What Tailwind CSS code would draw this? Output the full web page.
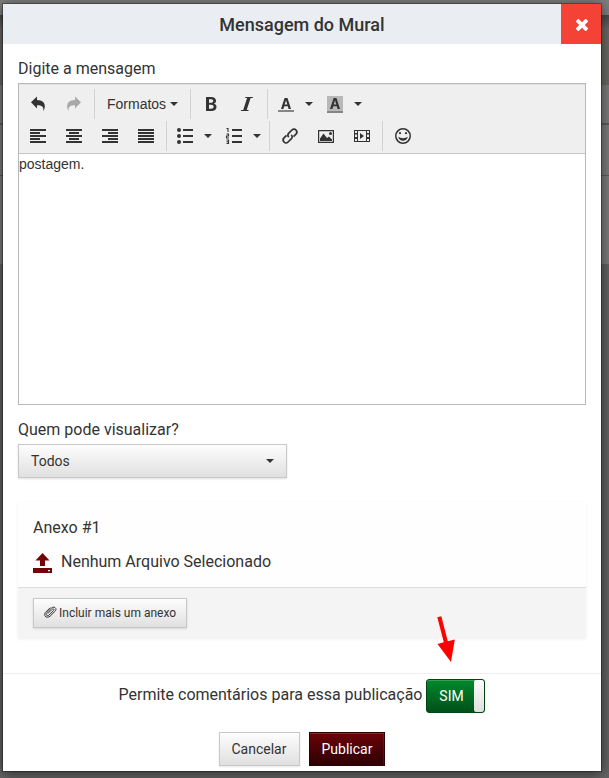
<!DOCTYPE html>
<html lang="pt-BR">
<head>
<meta charset="utf-8">
<title>Mensagem do Mural</title>
<script src="https://cdn.jsdelivr.net/npm/@tailwindcss/browser@4"></script>
</head>
<body class="relative h-[778px] w-[609px] overflow-hidden bg-[#555] font-['Roboto',sans-serif] text-base text-[#333]">
<!-- dimmed page behind the dialog -->
<div class="absolute inset-0 flex flex-col">
  <div class="h-[15px] bg-[#7d7d7d]"></div>
  <div class="h-[70px] bg-gradient-to-b from-[#484848] to-[#686764] to-20%"></div>
  <div class="h-[38px] bg-[#7b7b7b]"></div>
  <div class="h-[2px] bg-[#5c5c5e]"></div>
  <div class="h-[50px] bg-[#7b7b7b]"></div>
  <div class="h-px bg-[#5c5c5e]"></div>
  <div class="h-[88px] bg-[#7b7b7b]"></div>
  <div class="grow bg-[#636363]"></div>
</div>
<main class="relative mt-1 ml-[3px] h-[767px] w-[598px] bg-white shadow-[0_0_0_1px_rgba(0,0,0,0.3),0_2px_12px_rgba(0,0,0,0.6)]">
  <header class="flex h-10 bg-[#eaeef2]">
    <h1 class="grow pl-[40px] text-center text-[18px] leading-[41px] font-medium">Mensagem do Mural</h1>
    <button class="flex h-10 w-10 items-center justify-center bg-[#f44336]" aria-label="Fechar">
      <svg class="mt-px ml-px" width="12" height="12" viewBox="0 0 12 12"><path d="M2.300 2.300 9.700 9.700M9.700 2.300 2.300 9.700" stroke="#fff" stroke-width="3.800" stroke-linecap="square" /></svg>
    </button>
  </header>
  <div class="px-[15px] pt-[15px]">
    <label class="block h-6 text-base leading-[19px]">Digite a mensagem</label>
    <section class="h-[322px] w-[568px] border border-[#b8b8b8]">
      <div class="h-[70px] border-b border-[#c4c4c4] bg-[#efefef] pt-[5px] pl-px shadow-[inset_0_1px_0_#e2e2e2]">
        <div class="flex h-8 [&>svg]:shrink-0">
          <svg class="h-[30px] w-9" viewBox="-10 -7 36 30"><path d="M1 6.300 7 .5V4c6.500 0 10 4.500 6.500 11.200C13.700 10.800 12 9.300 7 9.300v3.200Z" fill="#333"/></svg>
          <svg class="h-[30px] w-9" viewBox="-10 -7 36 30"><path d="M15 6.300 9 .5V4C2.500 4-1 8.500 2.500 15.200 2.300 10.800 4 9.300 9 9.300v3.200Z" fill="#a8a8a8"/></svg>
          <span class="ml-0.5 h-[30px] w-px bg-[#d2d2d2]"></span>
          <span class="flex h-[30px] w-[95px] items-center pl-3 font-['Liberation_Sans',Arial,sans-serif] text-[14px] leading-5">Formatos<svg class="ml-[4px]" width="8" height="4" viewBox="0 0 8 4"><path d="M0 0h8L4 4Z" fill="#333"/></svg></span>
          <span class="h-[30px] w-px bg-[#d2d2d2]"></span>
          <svg class="ml-px h-[30px] w-9" viewBox="-11 -7 36 30"><path fill-rule="evenodd" d="M3 1h5c3.300 0 5 1.300 5 3.800 0 1.500-.8 2.500-2.100 3 1.700.4 2.600 1.500 2.600 3.200 0 2.600-1.900 4-5.300 4H3ZM6 3.200v3.500h2c1.400 0 2.200-.6 2.200-1.800S9.400 3.200 8 3.200Zm0 5.500v4.100h2.200c1.600 0 2.400-.7 2.400-2s-.8-2.100-2.500-2.100Z" fill="#333"/></svg>
          <svg class="h-[30px] w-9" viewBox="-11 -7 36 30"><path d="M6.500 1H14l-.4 1h-2L7.700 14h2l-.4 1H1.800l.4-1h2L8.100 2h-2Z" fill="#333"/></svg>
          <span class="ml-[3px] h-[30px] w-px bg-[#d2d2d2]"></span>
          <svg class="h-[30px] w-9" viewBox="-10 -7 36 30"><path fill-rule="evenodd" d="M6.600 2h2.900L13 13h-2.400l-.8-2.700H6.200L5.400 13H3ZM8 4.200 6.700 8.600h2.600Z" fill="#333"/><path d="M0 14h16v2H0Z" fill="#858585"/></svg>
          <svg class="h-[30px] w-[10px]" viewBox="-1 -13 10 30"><path d="M0 0h8L4 4Z" fill="#333"/></svg>
          <svg class="ml-[3px] h-[30px] w-9" viewBox="-10 -7 36 30"><path d="M0 0h16v16H0Z" fill="#b8b8b8"/><path fill-rule="evenodd" d="M6.600 2h2.900L13 13h-2.400l-.8-2.700H6.200L5.400 13H3ZM8 4.200 6.700 8.600h2.600Z" fill="#333"/><path d="M0 15h16v2H0Z" fill="#858585"/></svg>
          <svg class="h-[30px] w-[10px]" viewBox="-1 -13 10 30"><path d="M0 0h8L4 4Z" fill="#333"/></svg>
        </div>
        <div class="flex h-8 [&>svg]:shrink-0">
          <svg class="h-[30px] w-9" viewBox="-10 -7 36 30"><path d="M0 1h16v2H0ZM0 4h10v2H0ZM0 7h16v2H0ZM0 10h10v2H0ZM0 13h16v2H0Z" fill="#333"/></svg>
          <svg class="h-[30px] w-9" viewBox="-10 -7 36 30"><path d="M0 1h16v2H0ZM3 4h10v2H3ZM0 7h16v2H0ZM3 10h10v2H3ZM0 13h16v2H0Z" fill="#333"/></svg>
          <svg class="h-[30px] w-9" viewBox="-10 -7 36 30"><path d="M0 1h16v2H0ZM6 4h10v2H6ZM0 7h16v2H0ZM6 10h10v2H6ZM0 13h16v2H0Z" fill="#333"/></svg>
          <svg class="h-[30px] w-9" viewBox="-10 -7 36 30"><path d="M0 1h16v2H0ZM0 4h16v2H0ZM0 7h16v2H0ZM0 10h16v2H0ZM0 13h16v2H0Z" fill="#333"/></svg>
          <span class="ml-0.5 h-[30px] w-px bg-[#d2d2d2]"></span>
          <svg class="h-[30px] w-9" viewBox="-10 -7 36 30"><path d="M6 1h10v2H6ZM6 7h10v2H6ZM6 13h10v2H6Z" fill="#333"/><g fill="#333"><circle cx="2" cy="2" r="2"/><circle cx="2" cy="8" r="2"/><circle cx="2" cy="14" r="2"/></g></svg>
          <svg class="h-[30px] w-[10px]" viewBox="-1 -13 10 30"><path d="M0 0h8L4 4Z" fill="#333"/></svg>
          <svg class="ml-[3px] h-[30px] w-9" viewBox="-10 -7 36 30"><path d="M6 1h10v2H6ZM6 7h10v2H6ZM6 13h10v2H6Z" fill="#333"/><path d="M.5.500H2V4M.5 6h2v2h-2v2H3M.5 12h2v3.500h-2M.5 13.700h2" fill="none" stroke="#333" stroke-width="1.100"/></svg>
          <svg class="h-[30px] w-[10px]" viewBox="-1 -13 10 30"><path d="M0 0h8L4 4Z" fill="#333"/></svg>
          <span class="ml-[7px] h-[30px] w-px bg-[#d2d2d2]"></span>
          <svg class="ml-0.5 h-[30px] w-9" viewBox="-10 -7 36 30"><g fill="none" stroke="#333" stroke-width="1.700"><path d="M6.800 9.200C5.300 7.700 5.600 6.300 6.800 5.100L9.900 2C11.200.7 12.800.7 14 2s1.200 2.800 0 4.100l-2.500 2.500"/><path d="M9.200 6.800c1.500 1.500 1.200 2.900 0 4.100L6.100 14c-1.300 1.300-2.900 1.300-4.100 0s-1.200-2.800 0-4.100l2.500-2.500"/></g></svg>
          <svg class="h-[30px] w-9" viewBox="-10 -7 36 30"><path d="M.6 2.600h14.800v11.800H.6Z" fill="none" stroke="#333" stroke-width="1.200"/><path d="M2 13V10.500L5.500 5.500 9 10l2-1.500 3 3V13Z" fill="#333"/><circle cx="12.500" cy="5.500" r="1.500" fill="#333"/></svg>
          <svg class="h-[30px] w-9" viewBox="-10 -7 36 30"><path fill-rule="evenodd" d="M0 2h16v12H0ZM1 3v2h2V3Zm0 3.500V9h2V6.500ZM1 11v2h2v-2ZM4 3v10h8V3Zm9 0v2h2V3Zm0 3.500V9h2V6.500Zm0 4.500v2h2v-2Z" fill="#333"/><path d="M6 5v6l4-3Z" fill="#333"/></svg>
          <span class="ml-0.5 h-[30px] w-px bg-[#d2d2d2]"></span>
          <svg class="ml-0.5 h-[30px] w-9" viewBox="-10 -7 36 30"><circle cx="8" cy="8" r="7.250" fill="none" stroke="#333" stroke-width="1.500"/><circle cx="5" cy="5.200" r="1.100" fill="#333"/><circle cx="11" cy="5.200" r="1.100" fill="#333"/><path d="M3.200 8.800C5.500 10.600 10.500 10.600 12.800 8.800 12 14.200 4 14.200 3.200 8.800Z" fill="#333"/></svg>
        </div>
      </div>
      <div class="font-['Liberation_Sans',Arial,sans-serif] text-[14px] leading-5">postagem.</div>
    </section>
    <label class="mt-[15px] block h-6 leading-[19px]">Quem pode visualizar?</label>
    <button class="flex h-[34px] w-[269px] items-center justify-between border border-[#c8c8c8] bg-gradient-to-b from-[#fdfdfd] to-[#e0e0e0] pr-3 pl-3 text-[14px] shadow-[0_1px_2px_rgba(0,0,0,0.12)]">Todos<svg width="8" height="4" viewBox="0 0 8 4"><path d="M0 0h8L4 4Z" fill="#333"/></svg></button>
    <section class="mt-6 h-[136px] w-[568px] bg-[#fefefe] shadow-[0_1px_3px_rgba(0,0,0,0.07)]">
      <div class="h-[86px] border-b border-[#ddd] px-[15px] pt-4">
        <p class="leading-[19px]">Anexo #1</p>
        <div class="mt-[12px] flex items-center leading-[19px]">
          <svg class="mt-1 mr-[9px]" width="19" height="20" viewBox="0 0 19 20"><path d="M9.500 0 16.500 7.500H12V13H7V7.500H2.500Z" fill="#700407"/><path fill-rule="evenodd" d="M0 15h19v5H0Zm15 2v1.200h2V17Z" fill="#700407"/></svg>
          Nenhum Arquivo Selecionado
        </div>
      </div>
      <div class="h-[50px] bg-[#f4f4f4] px-[15px] pt-[10px]">
        <button class="flex h-[30px] w-[154px] items-center border border-[#c8c8c8] bg-gradient-to-b from-[#fdfdfd] to-[#e0e0e0] pl-[10px] text-[12px] whitespace-nowrap shadow-[0_1px_2px_rgba(0,0,0,0.12)]">
          <svg class="mr-[2px] mb-[2px] shrink-0" width="13" height="12" viewBox="0 0 13 12"><path d="m3.800 7.600 4.300-4.300c1.100-1.100 2.500.1 1.500 1.200L5.200 9C3.200 10.700 1 8.600 2.800 6.700L7.600 2c2.400-2.400 5.800.5 3.700 3L6.200 10.100C2.600 13-1 9.700 1.400 6.500L6.300 1.600" fill="none" stroke="#333" stroke-width="1"/></svg>Incluir mais um anexo
        </button>
      </div>
    </section>
  </div>
  <footer class="mt-[35px] border-t border-[#eee] pt-[5px]">
    <div class="flex h-[34px] items-center pl-[115.500px] leading-[19px]">
      <span class="w-[307.500px] pb-[4px] whitespace-nowrap">Permite comentários para essa publicação</span>
      <span class="flex h-[34px] w-[59px] overflow-hidden rounded-[3px] border border-[#00440f] bg-gradient-to-b from-[#008a2c] to-[#00501a] text-[14px] leading-8 text-white shadow-[inset_0_1px_0_rgba(255,255,255,0.2)]">
        <span class="w-[47px] pl-[2px] text-center">SIM</span><span class="h-8 w-[10px] rounded-[2px] bg-gradient-to-b from-[#fbfbfb] to-[#e0e0e0]"></span>
      </span>
    </div>
    <div class="mt-[19px] flex gap-[9px] pl-[216px] text-[14px]">
      <button class="h-[34px] w-[81px] border border-[#c8c8c8] bg-gradient-to-b from-[#fdfdfd] to-[#e0e0e0] pr-px shadow-[0_1px_2px_rgba(0,0,0,0.1)]">Cancelar</button>
      <button class="h-[34px] w-[76px] border border-[#310003] bg-gradient-to-b from-[#6c0408] to-[#2e0003] text-white shadow-[inset_0_1px_0_rgba(255,255,255,0.15),inset_-1px_0_0_rgba(255,255,255,0.08)]">Publicar</button>
    </div>
  </footer>
  <svg class="absolute top-[611px] left-[433px]" width="24" height="48" viewBox="0 0 24 48"><path d="m1.300 2.300 4-1.100 6.500 25 7-1.700L15 47 1.500 29l6.300-1.700Z" fill="#f00"/></svg>
</main>
</body>
</html>
